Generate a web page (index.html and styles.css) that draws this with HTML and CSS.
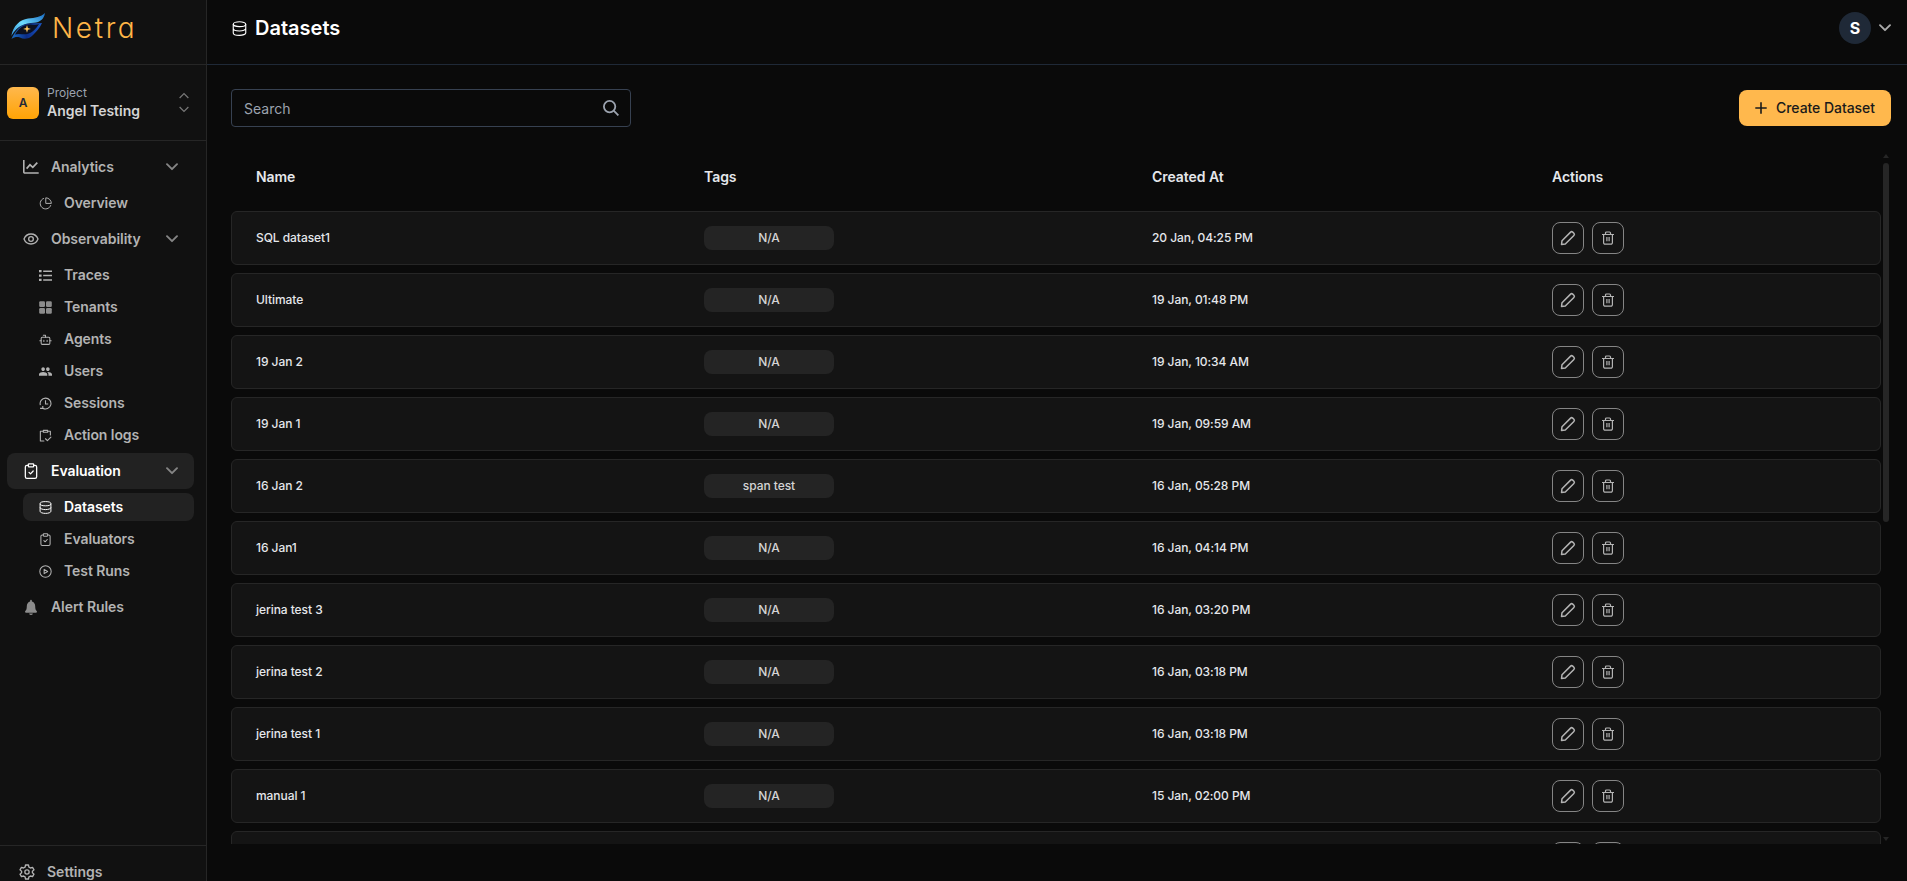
FILE: index.html
```html
<!DOCTYPE html>
<html lang="en">
<head>
  <meta charset="UTF-8">
  <meta name="viewport" content="width=device-width, initial-scale=1.0">
  <title>Netra - Datasets</title>
  <link rel="stylesheet" href="styles.css">
</head>
<body>

<!-- Icon sprite -->
<svg class="sprite" xmlns="http://www.w3.org/2000/svg">
  <symbol id="i-chevron" viewBox="0 0 12 8"><path d="M1 1.200l5 5 5-5" fill="none" stroke="currentColor" stroke-width="1.900" stroke-linecap="round" stroke-linejoin="round"/></symbol>
  <symbol id="i-arrow" viewBox="0 0 12 8"><path d="M1 1.200l5 5 5-5" fill="none" stroke="currentColor" stroke-width="1.400"/></symbol>
  <symbol id="i-chart" viewBox="0 0 16 16"><path d="M.8 1v12a1 1 0 0 0 1 1h13.900" fill="none" stroke="currentColor" stroke-width="1.600"/><path d="M3.600 9.600L7 5.800l2.800 2.500 4.500-4.700" fill="none" stroke="currentColor" stroke-width="1.700"/></symbol>
  <symbol id="i-pie" viewBox="0 0 24 24"><g fill="none" stroke="currentColor" stroke-width="1.800" stroke-linejoin="round"><path d="M9 2.500a10 10 0 1 0 12.800 12.500"/><path d="M12.500 1.500v10.300h10.300A10.500 10.500 0 0 0 12.500 1.500z"/></g></symbol>
  <symbol id="i-eye" viewBox="0 0 24 24"><g fill="none" stroke="currentColor" stroke-width="2"><path d="M1.500 12C3.500 7 7.500 4.500 12 4.500S20.500 7 22.500 12C20.500 17 16.500 19.500 12 19.500S3.500 17 1.500 12z"/><circle cx="12" cy="12" r="3.500"/></g></symbol>
  <symbol id="i-list" viewBox="0 0 13 13"><g fill="currentColor"><path d="M0 1h2.600v2.300H0zM0 5.400h2.600v2.300H0zM0 9.800h2.600v2.300H0z"/><path d="M4.200 1.400H13v1.500H4.200zM4.200 5.800H13v1.500H4.200zM4.200 10.200H13v1.500H4.200z"/></g></symbol>
  <symbol id="i-grid" viewBox="0 0 13 13"><g fill="currentColor"><rect x=".2" y=".2" width="5.800" height="5.800" rx="1.200"/><rect x="7" y=".2" width="5.800" height="5.800" rx="1.200"/><rect x=".2" y="7" width="5.800" height="5.800" rx="1.200"/><rect x="7" y="7" width="5.800" height="5.800" rx="1.200"/></g></symbol>
  <symbol id="i-bot" viewBox="0 0 24 24"><g fill="none" stroke="currentColor" stroke-width="1.900" stroke-linecap="round" stroke-linejoin="round"><path d="M12 8V4H8"/><rect x="4" y="8" width="16" height="13" rx="2"/><path d="M1.500 14.500H4M20 14.500h2.500M15 13.500v2M9 13.500v2"/></g></symbol>
  <symbol id="i-users" viewBox="1 1 22 22"><path fill="currentColor" d="M16 11c1.660 0 2.990-1.340 2.990-3S17.660 5 16 5s-3 1.340-3 3 1.340 3 3 3zm-8 0c1.660 0 2.990-1.340 2.990-3S9.660 5 8 5 5 6.340 5 8s1.340 3 3 3zm0 2c-2.330 0-7 1.170-7 3.500V19h14v-2.500c0-2.330-4.670-3.500-7-3.500zm8 0c-.29 0-.62.020-.97.050 1.160.84 1.970 1.970 1.970 3.450V19h6v-2.500c0-2.330-4.670-3.500-7-3.500z"/></symbol>
  <symbol id="i-clock" viewBox="0 0 24 24"><g fill="none" stroke="currentColor" stroke-width="2"><path d="M7 20.700A10 10 0 1 0 2.500 15"/><path d="M12 6v7h5M2 21h5v-4.500"/></g></symbol>
  <symbol id="i-log" viewBox="0 0 24 24"><g fill="none" stroke="currentColor" stroke-width="2" stroke-linecap="round" stroke-linejoin="round"><path d="M9 22H2.500V4H7M17 4h4v7"/><path d="M8 2.500h8V6H8zM12 18l3.500 3.500L22 15"/></g></symbol>
  <symbol id="i-clipboard" viewBox="0 0 24 24"><g fill="none" stroke="currentColor" stroke-width="1.900" stroke-linecap="round" stroke-linejoin="round"><path d="M8 3.500H6a2.500 2.500 0 0 0-2.500 2.500v14.500A2.500 2.500 0 0 0 6 23h12a2.500 2.500 0 0 0 2.500-2.500V6A2.500 2.500 0 0 0 18 3.500h-2"/><rect x="8" y="1.200" width="8" height="4.600" rx="1"/><path d="M9 14l2.300 2.300 4-4.300"/></g></symbol>
  <symbol id="i-db" viewBox="0 0 24 24"><g fill="none" stroke="currentColor" stroke-width="1.800"><ellipse cx="12" cy="5" rx="10" ry="3.900"/><path d="M2 5v14c0 2.200 4.500 3.900 10 3.900s10-1.700 10-3.900V5M2 12c0 2.200 4.500 3.900 10 3.900s10-1.700 10-3.900"/></g></symbol>
  <symbol id="i-play" viewBox="0 0 24 24"><g fill="none" stroke="currentColor" stroke-width="1.900" stroke-linejoin="round"><circle cx="12" cy="12" r="10.500"/><path d="M9.500 8l6.500 4-6.500 4z"/></g></symbol>
  <symbol id="i-bell" viewBox="0 0 24 24"><path fill="currentColor" d="M12 24a3 3 0 0 0 2.900-2.300H9.100A3 3 0 0 0 12 24zm8.500-5.900c-1.300-1.200-2.200-2.700-2.200-7.100 0-3.700-2-6.500-5-7.200V2.500a1.300 1.300 0 0 0-2.600 0v1.300c-3 .7-5 3.500-5 7.200 0 4.400-.9 5.900-2.200 7.100-1 .9-.4 2.400.9 2.400h15.200c1.300 0 1.900-1.500.9-2.400z"/></symbol>
  <symbol id="i-gear" viewBox="0 0 24 24"><g fill="none" stroke="currentColor" stroke-width="2" stroke-linejoin="round"><path d="M9.800 1.500h4.400l.7 3.200 2.300 1.300 3.100-1 2.200 3.800-2.400 2.200v2l2.400 2.200-2.200 3.800-3.100-1-2.300 1.300-.7 3.200H9.800l-.7-3.200L6.800 18l-3.100 1-2.200-3.800L3.900 13v-2L1.500 8.800 3.700 5l3.100 1 2.300-1.300z"/><circle cx="12" cy="12" r="3.200"/></g></symbol>
  <symbol id="i-search" viewBox="0 0 16 16"><g fill="none" stroke="currentColor" stroke-width="1.800"><circle cx="6.600" cy="6.600" r="5.700"/><path d="M10.700 10.700l4.700 4.700"/></g></symbol>
  <symbol id="i-plus" viewBox="0 0 12 12"><path d="M6 .3v11.400M.3 6h11.400" stroke="currentColor" stroke-width="1.600"/></symbol>
  <symbol id="i-pencil" viewBox="0 0 16 16"><path d="M1.500 14.500l.5-3.800 8.600-8.600a1.500 1.500 0 0 1 2.100 0l1.200 1.200a1.500 1.500 0 0 1 0 2.100L5.300 14z" fill="none" stroke="currentColor" stroke-width="1.500" stroke-linejoin="round"/></symbol>
  <symbol id="i-trash" viewBox="0 0 14 14"><g fill="none" stroke="currentColor" stroke-width="1.200"><path d="M1 3.500h12M2.600 3.500v8.200a1.500 1.500 0 0 0 1.500 1.500h5.800a1.500 1.500 0 0 0 1.500-1.500V3.500M4.500 3.300V2a1 1 0 0 1 1-1h3a1 1 0 0 1 1 1v1.300"/><path d="M5.900 6v4.300M8.100 6v4.300"/></g></symbol>
</svg>

<aside class="sidebar">
  <div class="brand">
    <svg class="brand-mark" viewBox="0 0 34 27">
      <defs>
        <linearGradient id="lid" x1="0" y1="1" x2="1" y2="0">
          <stop offset="0" stop-color="#2f8fd8"/><stop offset=".45" stop-color="#6fdcff"/><stop offset="1" stop-color="#1668c0"/>
        </linearGradient>
        <linearGradient id="under" x1="0" y1="0" x2="1" y2="0">
          <stop offset="0" stop-color="#1c6fc4"/><stop offset=".5" stop-color="#0b2c86"/><stop offset="1" stop-color="#1b58c8"/>
        </linearGradient>
      </defs>
      <path fill="url(#under)" d="M.5 26C4 18 9 12.500 15 11c7-1.500 11 0 16-1-2 5-6 9-9 12-4 4-9 5-13 2.500-3-.9-5.500-.5-8.500 1.500z"/>
      <path fill="#0b1020" d="M4 21.500C8 14.500 14 11 20 11.500c3 .2 6 .5 8-.5-3 5-7 9-12 10-4 .8-8-1-12 .5z"/>
      <path fill="url(#lid)" d="M.3 23C2 13 9 6.500 17 5.500 24 4.800 30 4 34 0c-1 6-5 9.500-11 9.700C14 10 7 12 .3 23z"/>
      <path fill="#ffc861" d="M16 12l.9 3 3 .9-3 .9-.9 3-.9-3-3-.9 3-.9z"/>
    </svg>
    <span class="brand-name">Netra</span>
  </div>

  <div class="project">
    <div class="project-badge">A</div>
    <div class="project-text">
      <span class="project-label">Project</span>
      <span class="project-name">Angel Testing</span>
    </div>
    <div class="project-arrows">
      <svg class="flip"><use href="#i-arrow"/></svg>
      <svg><use href="#i-arrow"/></svg>
    </div>
  </div>

  <nav class="nav">
    <a class="item"><svg class="icon"><use href="#i-chart"/></svg><span>Analytics</span><svg class="chevron"><use href="#i-chevron"/></svg></a>
    <a class="item sub"><svg class="icon"><use href="#i-pie"/></svg><span>Overview</span></a>
    <a class="item"><svg class="icon"><use href="#i-eye"/></svg><span>Observability</span><svg class="chevron"><use href="#i-chevron"/></svg></a>
    <a class="item sub"><svg class="icon"><use href="#i-list"/></svg><span>Traces</span></a>
    <a class="item sub"><svg class="icon dim"><use href="#i-grid"/></svg><span>Tenants</span></a>
    <a class="item sub"><svg class="icon"><use href="#i-bot"/></svg><span>Agents</span></a>
    <a class="item sub"><svg class="icon"><use href="#i-users"/></svg><span>Users</span></a>
    <a class="item sub"><svg class="icon"><use href="#i-clock"/></svg><span>Sessions</span></a>
    <a class="item sub"><svg class="icon"><use href="#i-log"/></svg><span>Action logs</span></a>
    <a class="item active"><svg class="icon"><use href="#i-clipboard"/></svg><span>Evaluation</span><svg class="chevron"><use href="#i-chevron"/></svg></a>
    <a class="item sub active"><svg class="icon"><use href="#i-db"/></svg><span>Datasets</span></a>
    <a class="item sub"><svg class="icon"><use href="#i-clipboard"/></svg><span>Evaluators</span></a>
    <a class="item sub"><svg class="icon"><use href="#i-play"/></svg><span>Test Runs</span></a>
    <a class="item"><svg class="icon dim"><use href="#i-bell"/></svg><span>Alert Rules</span></a>
  </nav>

  <a class="settings"><svg><use href="#i-gear"/></svg>Settings</a>
</aside>

<main class="main">
  <header class="topbar">
    <svg class="title-icon"><use href="#i-db"/></svg>
    <h1>Datasets</h1>
    <div class="user">
      <div class="user-avatar">S</div>
      <svg><use href="#i-chevron"/></svg>
    </div>
  </header>

  <div class="toolbar">
    <div class="search">
      <input type="text" placeholder="Search">
      <svg><use href="#i-search"/></svg>
    </div>
    <button class="create"><svg><use href="#i-plus"/></svg>Create Dataset</button>
  </div>

  <div class="table-wrap">
    <div class="table">
      <div class="row head"><span>Name</span><span>Tags</span><span>Created At</span><span>Actions</span></div>
      <div id="rows" class="rows"></div>
    </div>
    <div class="scrollbar"><i class="up"></i><i class="thumb"></i><i class="down"></i></div>
  </div>
</main>

<script>
  const datasets = [
    ['SQL dataset1', 'N/A', '20 Jan, 04:25 PM'],
    ['Ultimate', 'N/A', '19 Jan, 01:48 PM'],
    ['19 Jan 2', 'N/A', '19 Jan, 10:34 AM'],
    ['19 Jan 1', 'N/A', '19 Jan, 09:59 AM'],
    ['16 Jan 2', 'span test', '16 Jan, 05:28 PM'],
    ['16 Jan1', 'N/A', '16 Jan, 04:14 PM'],
    ['jerina test 3', 'N/A', '16 Jan, 03:20 PM'],
    ['jerina test 2', 'N/A', '16 Jan, 03:18 PM'],
    ['jerina test 1', 'N/A', '16 Jan, 03:18 PM'],
    ['manual 1', 'N/A', '15 Jan, 02:00 PM'],
    ['', '', '']
  ];

  document.getElementById('rows').innerHTML = datasets.map(([name, tag, created]) => `
    <div class="row">
      <span class="cell">${name}</span>
      <span class="tag">${tag}</span>
      <span class="cell">${created}</span>
      <span class="actions">
        <button><svg class="pencil"><use href="#i-pencil"/></svg></button>
        <button><svg class="trash"><use href="#i-trash"/></svg></button>
      </span>
    </div>`).join('');
</script>

</body>
</html>
```
FILE: styles.css
```css
* {
  box-sizing: border-box;
}
body {
  margin: 0;
  height: 100vh;
  display: flex;
  overflow: hidden;
  background: #0a0a0a;
  color: #e5e7eb;
  font-family: Inter, "Liberation Sans", sans-serif;
}
svg {
  display: block;
  flex: none;
}
.sprite {
  display: none;
}

/* sidebar */
.sidebar {
  width: 207px;
  flex: none;
  display: flex;
  flex-direction: column;
  background: #111;
  border-right: 1px solid #262626;
  color: #b3b3b3;
}
.brand {
  height: 65px;
  flex: none;
  display: flex;
  align-items: flex-start;
  padding: 13px 0 0 11px;
  border-bottom: 1px solid #262626;
}
.brand-mark {
  width: 34px;
  height: 27px;
}
.brand-name {
  margin: -2px 0 0 7px;
  font-size: 28px;
  line-height: 34px;
  font-weight: 300;
  letter-spacing: 2.6px;
  font-feature-settings: "cv11";
  color: #ffb547;
}
.project {
  height: 76px;
  flex: none;
  display: flex;
  align-items: center;
  padding: 0 16px 0 7px;
  border-bottom: 1px solid #262626;
}
.project-badge {
  width: 32px;
  height: 32px;
  margin-right: 8px;
  border-radius: 6px;
  background: linear-gradient(#ffb84d, #ffa305);
  color: #1f2937;
  font-size: 12px;
  font-weight: 600;
  line-height: 32px;
  text-align: center;
}
.project-text {
  flex: 1;
  display: flex;
  flex-direction: column;
}
.project-label {
  font-size: 12px;
  line-height: 16px;
  color: #9ca3af;
}
.project-name {
  font-size: 14px;
  line-height: 20px;
  font-weight: 600;
  color: #d4d4d4;
}
.project-arrows {
  display: flex;
  flex-direction: column;
  gap: 7px;
  color: #777;
}
.project-arrows svg {
  width: 12px;
  height: 7px;
}
.flip {
  transform: scaleY(-1);
}
.nav {
  flex: 1;
  display: flex;
  flex-direction: column;
  gap: 4px;
  padding: 8px 12px 0 7px;
}
.item {
  height: 36px;
  flex: none;
  display: flex;
  align-items: center;
  padding: 0 16px;
  border-radius: 8px;
  font-size: 14px;
  font-weight: 600;
  letter-spacing: -0.08px;
}
.item span {
  padding-bottom: 2px;
}
.item .icon {
  width: 16px;
  height: 16px;
  margin-right: 12px;
}
.item.sub {
  height: 28px;
  margin-left: 16px;
}
.item.sub .icon {
  width: 13px;
  height: 13px;
  margin-right: 12px;
}
.item .dim {
  color: #8c8c8c;
}
.item.active {
  background: #222;
  color: #fff;
}
.chevron {
  width: 12px;
  height: 8px;
  margin-left: auto;
  color: #858585;
}
.settings {
  height: 36px;
  flex: none;
  display: flex;
  align-items: flex-start;
  padding: 17px 0 0 19px;
  border-top: 1px solid #262626;
  font-size: 14px;
  font-weight: 600;
  line-height: 17px;
}
.settings svg {
  width: 16px;
  height: 16px;
  margin: 1px 12px 0 0;
}

/* main area */
.main {
  flex: 1;
  min-width: 0;
  display: flex;
  flex-direction: column;
}
.topbar {
  height: 65px;
  flex: none;
  display: flex;
  align-items: center;
  padding: 0 16px 8px 25px;
  border-bottom: 1px solid #1f2937;
}
.title-icon {
  width: 15px;
  height: 15px;
  color: #fff;
}
h1 {
  margin: 0 0 0 8px;
  font-size: 20px;
  line-height: 28px;
  font-weight: 600;
  color: #fff;
}
.user {
  margin-left: auto;
  display: flex;
  align-items: center;
  gap: 8px;
  color: #aaa;
}
.user-avatar {
  width: 32px;
  height: 32px;
  border-radius: 50%;
  background: #1f2937;
  color: #fff;
  font-size: 16px;
  font-weight: 700;
  line-height: 32px;
  text-align: center;
}
.user svg {
  width: 12px;
  height: 8px;
}
.toolbar {
  display: flex;
  justify-content: space-between;
  align-items: center;
  padding: 24px 16px 0 24px;
}
.search {
  width: 400px;
  height: 38px;
  display: flex;
  align-items: center;
  padding: 0 11px 0 12px;
  border: 1px solid #374151;
  border-radius: 4px;
  color: #9ca3af;
}
.search input {
  flex: 1;
  padding: 0;
  border: 0;
  outline: 0;
  background: none;
  color: #e5e7eb;
  font: 14px Inter, sans-serif;
}
.search input::placeholder {
  color: #9ca3af;
}
.search svg {
  width: 16px;
  height: 16px;
}
.create {
  width: 152px;
  height: 36px;
  display: flex;
  align-items: center;
  gap: 9px;
  padding: 0 0 1px 16px;
  border: 0;
  border-radius: 8px;
  background: #ffb84d;
  color: #1a1a1a;
  font: 500 14px Inter, sans-serif;
  letter-spacing: -0.05px;
  white-space: nowrap;
}
.create svg {
  width: 12px;
  height: 12px;
}

/* datasets table */
.table-wrap {
  height: 692px;
  flex: none;
  display: flex;
  margin-top: 25px;
  padding: 0 18px 0 24px;
  overflow: hidden;
}
.table {
  flex: 1;
}
.row {
  height: 54px;
  display: grid;
  grid-template-columns: 448px 448px 400px 1fr;
  align-items: center;
  padding: 0 24px;
  border: 1px solid #262626;
  border-radius: 6px;
  background: #141414;
  font-size: 12px;
  font-weight: 500;
  letter-spacing: -0.06px;
}
.head {
  height: 59px;
  padding-bottom: 11px;
  background: none;
  border-color: transparent;
  font-size: 14px;
  font-weight: 600;
}
.cell {
  padding-bottom: 2px;
}
.rows {
  display: flex;
  flex-direction: column;
  gap: 8px;
}
.tag {
  width: 130px;
  height: 24px;
  border-radius: 8px;
  background: #242424;
  line-height: 24px;
  text-align: center;
  color: #d4d4d4;
}
.actions {
  display: flex;
  gap: 8px;
}
.actions button {
  width: 32px;
  height: 32px;
  display: flex;
  align-items: center;
  justify-content: center;
  padding: 0;
  border: 1px solid #858585;
  border-radius: 8px;
  background: none;
  color: #b3b3b3;
}
.pencil {
  width: 16px;
  height: 16px;
}
.trash {
  width: 14px;
  height: 14px;
}
.scrollbar {
  width: 6px;
  display: flex;
  flex-direction: column;
  margin-left: 2px;
  padding: 2px 0 3px;
}
.up, .down {
  border: 3px solid transparent;
}
.up {
  border-top: 0;
  border-bottom: 4px solid #262626;
}
.down {
  margin-top: auto;
  border-bottom: 0;
  border-top: 4px solid #262626;
}
.thumb {
  height: 359px;
  margin-top: 5px;
  border-radius: 3px;
  background: #262626;
}
```
